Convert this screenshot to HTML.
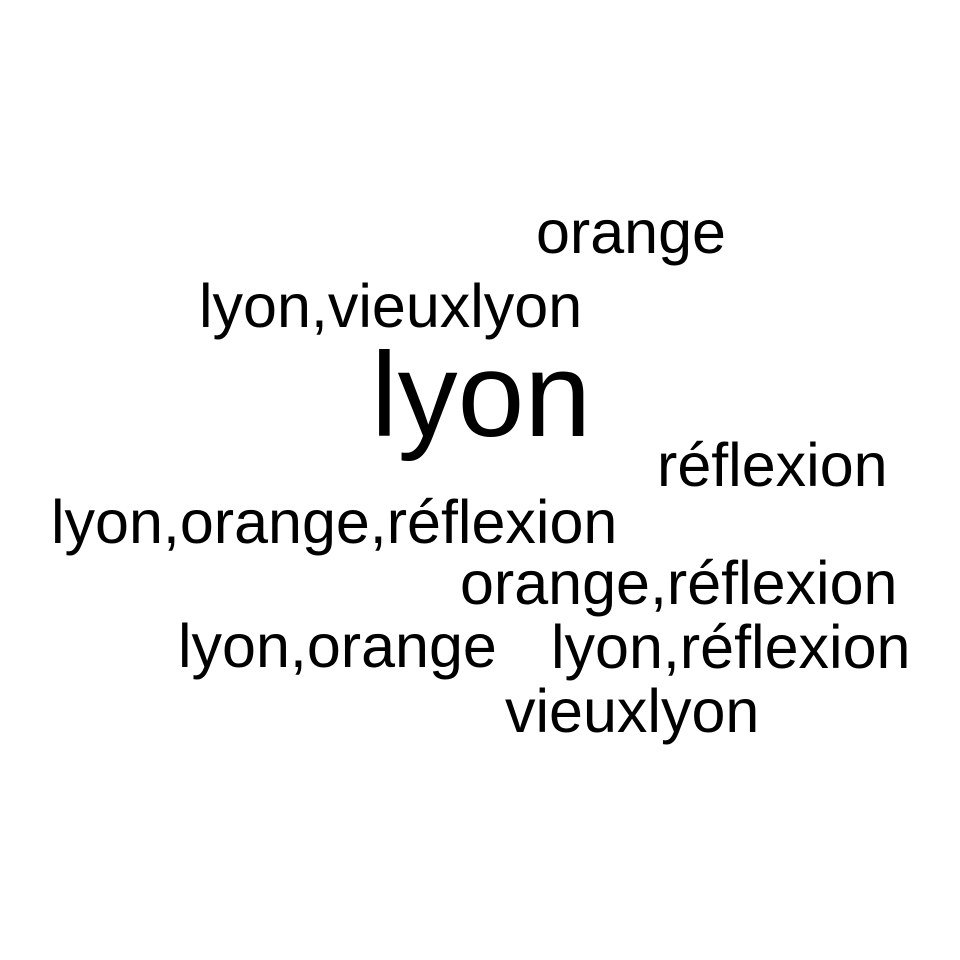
<!DOCTYPE html>
<html><head><meta charset="utf-8"><style>
html,body{margin:0;padding:0;background:#fff;width:960px;height:960px;overflow:hidden}
text{font-family:"Liberation Sans",Arial,sans-serif;fill:#000}
</style></head><body>
<svg width="960" height="960" xmlns="http://www.w3.org/2000/svg">
<text x="536" y="253" font-size="61">orange</text>
<text x="199" y="327" font-size="61">lyon,vieuxlyon</text>
<text x="371" y="436" font-size="120">lyon</text>
<text x="657" y="486" font-size="61">réflexion</text>
<text x="51" y="543" font-size="61">lyon,orange,réflexion</text>
<text x="460" y="604" font-size="61">orange,réflexion</text>
<text x="178" y="667" font-size="61">lyon,orange</text>
<text x="551" y="668" font-size="61">lyon,réflexion</text>
<text x="505" y="732" font-size="61">vieuxlyon</text>
</svg>
</body></html>
